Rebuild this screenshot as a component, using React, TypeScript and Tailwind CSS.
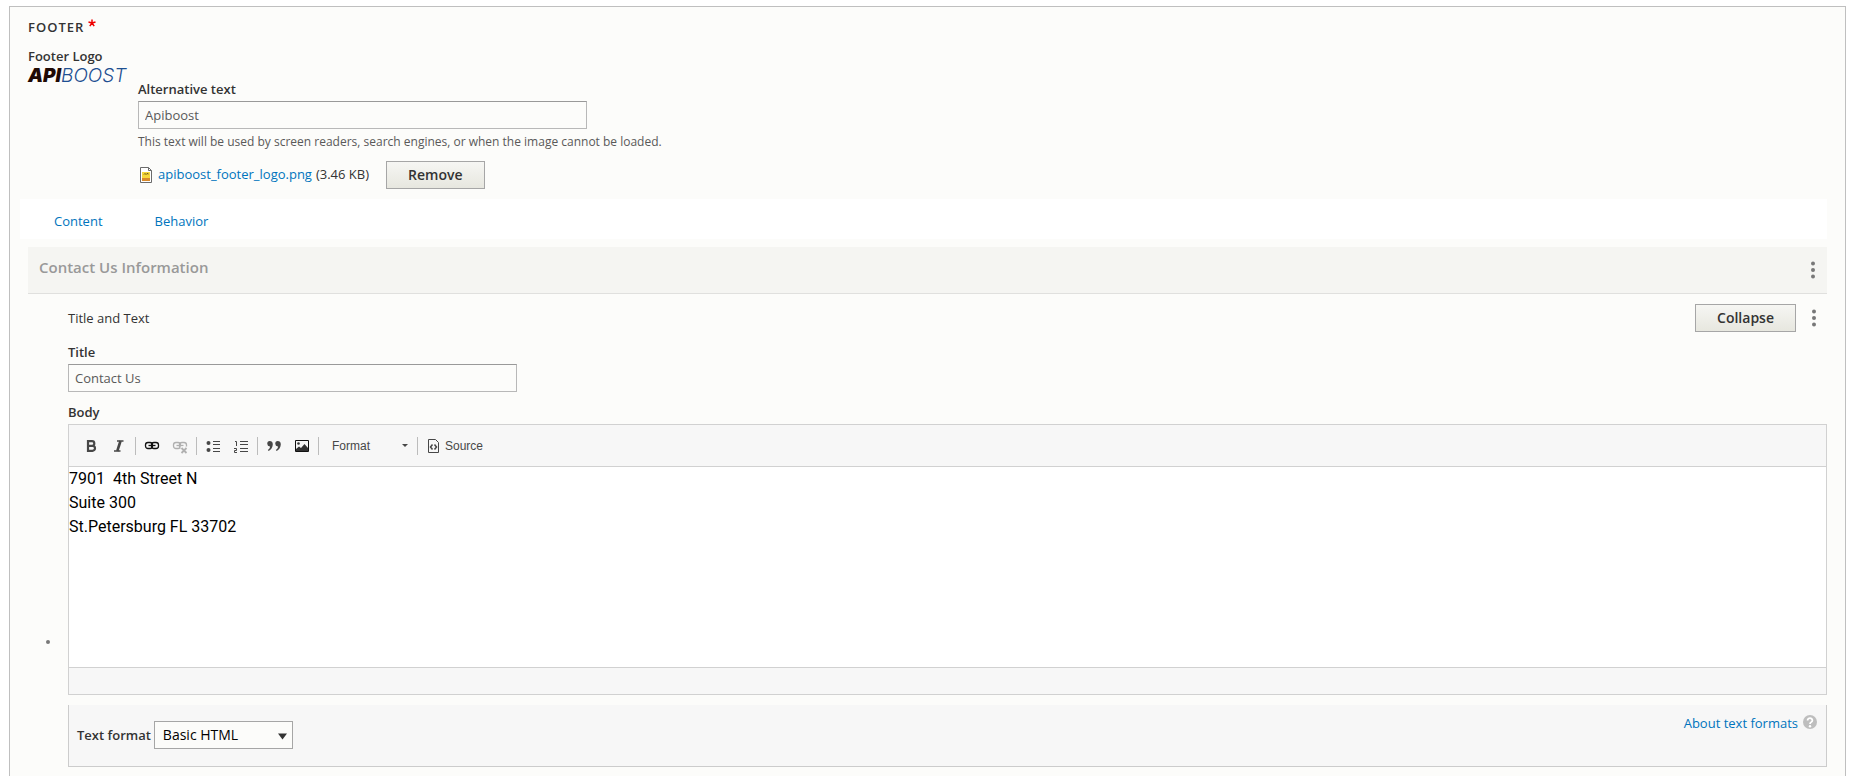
import { useState } from 'react';
import type { ReactNode } from 'react';

const labelClass = 'block text-[13px] leading-5 font-semibold text-[#333]';
const inputClass =
  'mt-0.5 block h-7 w-full max-w-[449px] border border-[#b8b8b8] border-t-[#999] bg-[#fcfcfa] px-1.5 text-[13px] text-[#595959] outline-none focus:border-[#40b6ff]';
const linkClass = 'text-[#0074bd] hover:underline';

function Button({ children }: { children: ReactNode }) {
  return (
    <button
      type="button"
      className="h-7 border border-[#a6a6a6] bg-gradient-to-b from-[#f6f6f3] to-[#e7e7df] px-[21px] text-sm leading-5 font-semibold text-[#333]"
    >
      {children}
    </button>
  );
}

function MoreButton({ label }: { label: string }) {
  return (
    <button type="button" aria-label={label} className="flex h-7 w-5 items-center justify-center">
      <svg width="4" height="18" viewBox="0 0 4 18" fill="#787878">
        <circle cx="2" cy="2.5" r="2" />
        <circle cx="2" cy="9" r="2" />
        <circle cx="2" cy="15.5" r="2" />
      </svg>
    </button>
  );
}

function Logo() {
  return (
    <div className="w-[110px] shrink-0 font-[Inter,sans-serif] text-[19px] leading-4 whitespace-nowrap italic">
      <span className="font-black text-[#1f0a05]">API</span>
      <span className="font-light text-[#1d4f91]">BOOST</span>
    </div>
  );
}

function FileIcon() {
  return (
    <svg width="12" height="16" viewBox="0 0 12 16">
      <path d="M.5.5h8l3 3v12H.5z" fill="#fff" stroke="#6b6b6b" />
      <path d="M8.5.5v3h3" fill="none" stroke="#6b6b6b" />
      <path d="M2 5h8v9H2z" fill="#f7d83a" />
      <path d="M2 11h8v3H2z" fill="#d98a2b" />
      <path d="M4 7.5l1-1 1 1 1-1 1.5.5" fill="none" stroke="#5a4a10" />
    </svg>
  );
}

function Separator() {
  return <span className="mx-0.5 h-[18px] w-px bg-[#bcbcbc]" />;
}

function ToolButton({ label, children, disabled }: { label: string; children: ReactNode; disabled?: boolean }) {
  return (
    <button
      type="button"
      aria-label={label}
      disabled={disabled}
      className="flex h-[26px] w-7 items-center justify-center disabled:opacity-40"
    >
      <svg width="16" height="16" viewBox="0 0 16 16" fill="none" stroke="#474747">
        {children}
      </svg>
    </button>
  );
}

const chain = (
  <>
    <rect x="1.5" y="4.5" width="7" height="6" rx="2.5" strokeWidth="1.3" />
    <rect x="7.5" y="4.5" width="7" height="6" rx="2.5" strokeWidth="1.3" />
    <path d="M4.5 7.5h7" strokeWidth="1.3" />
  </>
);

function Toolbar() {
  return (
    <div className="flex h-[42px] items-center border-b border-[#d1d1d1] bg-[#f7f7f7] pl-2">
      <ToolButton label="Bold">
        <path d="M5 3.2h4a2.200 2.200 0 0 1 0 4.600h-4zM5 7.800h4.500a2.500 2.500 0 0 1 0 5h-4.500z" strokeWidth="2.2" />
      </ToolButton>
      <ToolButton label="Italic">
        <path d="M6 3h6.500M3 13h6.500" strokeWidth="1.6" />
        <path d="M9.500 3l-3.200 10" strokeWidth="2.6" />
      </ToolButton>
      <Separator />
      <ToolButton label="Link">
        <g stroke="#111">{chain}</g>
      </ToolButton>
      <ToolButton label="Unlink" disabled>
        {chain}
        <path d="M8.500 8.500h7v7h-7z" fill="#f7f7f7" stroke="none" />
        <path d="M9.500 10l5 5M14.500 10l-5 5" strokeWidth="1.8" />
      </ToolButton>
      <Separator />
      <ToolButton label="Bulleted list">
        <path d="M8 3.5h7M8 6.5h7M8 10.5h7M8 13.5h7" />
        <circle cx="3.5" cy="5" r="2" fill="#474747" stroke="none" />
        <circle cx="3.5" cy="12" r="2" fill="#474747" stroke="none" />
      </ToolButton>
      <ToolButton label="Numbered list">
        <path d="M7 3.5h8M7 6.5h8M7 10.5h8M7 13.5h8" />
        <path d="M2 3.5h1.500V8M1 10.500h2.500v2h-2v2H4" />
      </ToolButton>
      <Separator />
      <ToolButton label="Block quote">
        <g fill="#474747" stroke="none">
          <path d="M3.800 3a2.700 2.700 0 1 0 .3 5.400C4 10 3.200 11 1.800 12l.9 1C5.200 11.500 6.800 9 6.800 6.200 6.800 4.200 5.500 3 3.800 3z" />
          <path d="M11.800 3a2.700 2.700 0 1 0 .3 5.400c-.1 1.600-.9 2.600-2.300 3.600l.9 1c2.500-1.500 4.100-4 4.100-6.800 0-2-1.300-3.200-3-3.200z" />
        </g>
      </ToolButton>
      <ToolButton label="Image">
        <path d="M1.500 2.500h13v11h-13z" stroke="#111" />
        <path d="M2 13v-2l3-2.500 2 1.500 3.500-4L14 10v3z" fill="#333" stroke="none" />
        <circle cx="4.500" cy="5.500" r="1.300" fill="#333" stroke="none" />
      </ToolButton>
      <Separator />
      <button
        type="button"
        className="flex h-[26px] w-[94px] items-center justify-between pr-[7px] pl-[11px] font-['Liberation_Sans',sans-serif] text-xs text-[#484848]"
      >
        Format
        <svg width="6" height="3" viewBox="0 0 6 3" fill="#474747">
          <path d="M0 0h6L3 3z" />
        </svg>
      </button>
      <Separator />
      <button
        type="button"
        className="flex h-[26px] items-center gap-1 px-[5px] font-['Liberation_Sans',sans-serif] text-xs text-[#484848]"
      >
        <svg width="16" height="16" viewBox="0 0 16 16" fill="none" stroke="#474747">
          <path d="M3.5 1.5h7l3 3v10h-10z" />
          <path d="M7.500 6.500l-2 2.500 2 2.500M9.500 6.500l2 2.500-2 2.500" strokeWidth="1.5" />
        </svg>
        Source
      </button>
    </div>
  );
}

function Editor() {
  return (
    <div className="mt-0.5 border border-[#d1d1d1]">
      <Toolbar />
      <div
        contentEditable
        suppressContentEditableWarning
        role="textbox"
        aria-labelledby="body-label"
        className="min-h-[200px] bg-white font-[Roboto,sans-serif] text-base leading-6 whitespace-pre-wrap text-black outline-none"
      >
        {'7901  4th Street N\nSuite 300\nSt.Petersburg FL 33702'}
      </div>
      <div className="h-[27px] border-t border-[#d1d1d1] bg-[#f7f7f7]" />
    </div>
  );
}

function TextFormat() {
  const [format, setFormat] = useState('basic_html');

  return (
    <div className="mt-2.5 flex items-start justify-between border border-t-0 border-[#ccc] bg-[#f7f7f7] pt-2.5 pr-2 pb-[17px] pl-2">
      <div className="mt-1.5 flex items-center gap-[3px]">
        <label htmlFor="text-format" className={labelClass}>
          Text format
        </label>
        <div className="relative">
          <select
            id="text-format"
            value={format}
            onChange={(e) => setFormat(e.target.value)}
            className="block h-7 w-[139px] appearance-none border border-[#a6a6a6] bg-[#fcfcfa] pl-2 text-sm leading-5 text-black"
          >
            <option value="basic_html">Basic HTML</option>
            <option value="full_html">Full HTML</option>
          </select>
          <svg className="pointer-events-none absolute top-3 right-1.5" width="9" height="7" viewBox="0 0 9 7" fill="#333">
            <path d="M0 .5h9L4.500 6.500z" />
          </svg>
        </div>
      </div>
      <a href="#formats" className={`flex items-center gap-1 text-[13px] leading-4 ${linkClass}`}>
        About text formats
        <svg width="16" height="16" viewBox="0 0 16 16">
          <circle cx="8" cy="7" r="7" fill="#bebebe" />
          <path d="M5.600 5.500a2.400 2.200 0 1 1 3.800 1.600C8.400 7.700 8 8 8 8.900" fill="none" stroke="#fff" strokeWidth="1.8" />
          <circle cx="8" cy="11.2" r="1.2" fill="#fff" />
        </svg>
      </a>
    </div>
  );
}

function App() {
  const [altText, setAltText] = useState('Apiboost');
  const [title, setTitle] = useState('Contact Us');

  return (
    <div className="bg-white pt-1.5 pr-2.5 pl-[9px] font-['Open_Sans',sans-serif] text-[13px] text-[#333]">
      <section className="min-h-[calc(100vh-6px)] border border-b-0 border-[#bfbfbf] bg-[#fcfcfa] px-[18px] pt-2.5">
        <h2 className="flex items-center gap-1 text-[13px] leading-5 font-semibold tracking-[1px] uppercase">
          Footer
          <svg width="8" height="8" viewBox="0 0 8 8" className="mb-2" stroke="#e00" strokeWidth="1.5">
            <path d="M4 .5V4M4 4l3.500-1M4 4l2.200 3.200M4 4L1.800 7.200M4 4L.5 3" />
          </svg>
        </h2>

        <div className="mt-[9px]">
          <div className={labelClass}>Footer Logo</div>
          <div className="mt-0.5 flex">
            <Logo />
            <div className="flex-1 pt-[11px]">
              <label htmlFor="alt-text" className={labelClass}>
                Alternative text
              </label>
              <input
                id="alt-text"
                type="text"
                value={altText}
                onChange={(e) => setAltText(e.target.value)}
                className={inputClass}
              />
              <p className="mt-[3px] text-xs leading-5 text-[#595959]">
                This text will be used by screen readers, search engines, or when the image cannot be loaded.
              </p>
              <div className="mt-[9px] flex items-center">
                <span className="flex w-5 pl-0.5">
                  <FileIcon />
                </span>
                <a href="#logo" className={linkClass}>
                  apiboost_footer_logo.png
                </a>
                <span className="mr-[17px] ml-1">(3.46 KB)</span>
                <Button>Remove</Button>
              </div>
            </div>
          </div>
        </div>

        <nav className="mt-2.5 -ml-2 flex h-10 items-center gap-[52px] bg-white pt-1.5 pl-[34px]">
          <a href="#content" className={linkClass}>
            Content
          </a>
          <a href="#behavior" className={linkClass}>
            Behavior
          </a>
        </nav>

        <div className="mt-2 flex h-[47px] items-center justify-between border-b border-[#e0e0de] bg-[#f5f5f2] pr-1 pl-[11px]">
          <h3 className="pb-1.5 text-[15px] leading-5 font-semibold text-[#999]">Contact Us Information</h3>
          <MoreButton label="More paragraph actions" />
        </div>

        <div className="flex">
          <div className="flex w-10 justify-center pt-[346px]">
            <span className="h-1 w-1 rounded-full bg-[#787878]" />
          </div>
          <div className="min-w-0 flex-1 pt-2.5">
            <div className="flex items-center justify-between">
              <span className="pt-0.5">Title and Text</span>
              <div className="flex gap-2 pr-[3px]">
                <Button>Collapse</Button>
                <MoreButton label="More item actions" />
              </div>
            </div>

            <div className="mt-2.5">
              <label htmlFor="title" className={labelClass}>
                Title
              </label>
              <input
                id="title"
                type="text"
                value={title}
                onChange={(e) => setTitle(e.target.value)}
                className={inputClass}
              />
            </div>

            <div className="mt-2.5">
              <div id="body-label" className={labelClass}>
                Body
              </div>
              <Editor />
            </div>
            <TextFormat />
          </div>
        </div>
      </section>
    </div>
  );
}

export default App;
